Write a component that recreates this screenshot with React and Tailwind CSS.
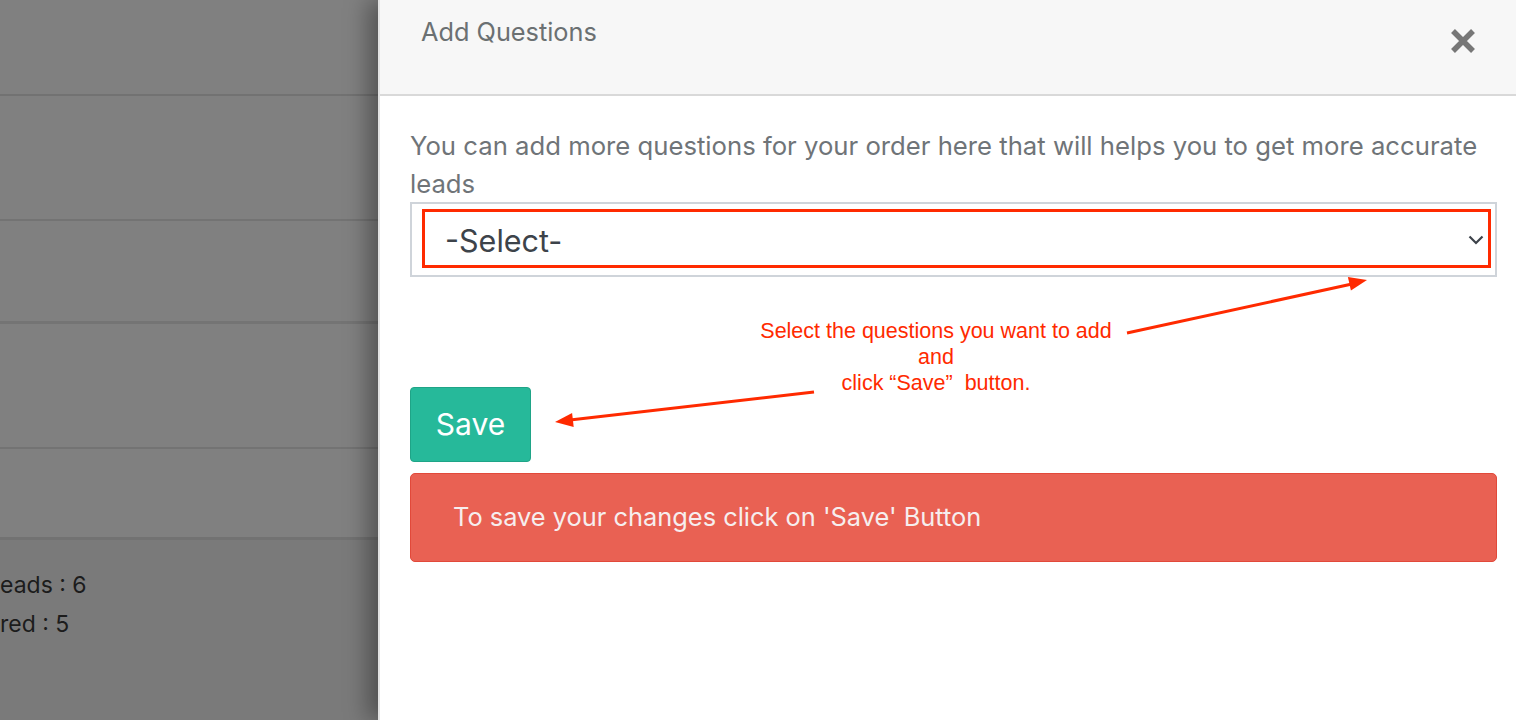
import React from "react";

export default function App() {
  return (
    <div className="relative flex h-[720px] w-[1516px] overflow-hidden bg-white" style={{ fontFamily: "Inter, 'Liberation Sans', sans-serif" }}>
      {/* dimmed background page */}
      <div className="flex w-[378px] shrink-0 flex-col bg-[#808080]">
        <div className="h-[96px] border-b-2 border-[#727272]" />
        <div className="h-[125px] border-b-2 border-[#737373]" />
        <div className="h-[103px] border-b-[3px] border-[#747474]" />
        <div className="h-[125px] border-b-2 border-[#737373]" />
        <div className="h-[91px] border-b-[3px] border-[#727272]" />
        <div className="flex-1 bg-[#7a7a7a] pt-[26px] text-[23px] leading-[39px] text-[#1c1c1c]">
          <div>eads : 6</div>
          <div>red : 5</div>
        </div>
      </div>

      {/* side panel */}
      <div className="relative z-10 flex flex-1 flex-col border-l-2 border-[#e3e3e3] bg-white shadow-[-10px_0_22px_rgba(0,0,0,0.35)]">
        <div className="flex h-[96px] shrink-0 items-start justify-between border-b-2 border-[#d9d9d9] bg-[#f7f7f7] pl-[41px] pr-[40px]">
          <div className="pt-[14px] text-[25.3px] leading-[36px] text-[#6b7072]">Add Questions</div>
          <svg className="mt-[28px]" width="26" height="26" viewBox="0 0 26 26">
            <path d="M3 3 L23 23 M23 3 L3 23" stroke="#777777" strokeWidth="5.5" strokeLinecap="butt" />
          </svg>
        </div>

        <div className="flex flex-col pl-[30px] pr-[19px] pt-[31px]">
          <p className="text-[25.7px] leading-[38px] text-[#6f7478]">
            You can add more questions for your order here that will helps you to get more accurate leads
          </p>
          <div className="mt-[-1px] h-[75px] border-2 border-[#cfd4da] pb-[7px] pl-[10px] pr-[4px] pt-[5px]">
            <div className="flex h-full items-center justify-between border-[3px] border-[#ff2a00] pl-[20px] pr-[4px]">
              <span className="pt-[5px] text-[30.5px] leading-none text-[#3d434a]">-Select-</span>
              <svg className="mt-[2px]" width="16" height="10" viewBox="0 0 16 10">
                <path d="M1.5 1.5 L8 8 L14.5 1.5" fill="none" stroke="#3d434a" strokeWidth="2.2" />
              </svg>
            </div>
          </div>

          <button className="mt-[110px] flex h-[75px] w-[121px] items-center justify-center rounded-[4px] border border-[#1fa487] bg-[#26b99a] text-[30px] text-white">
            Save
          </button>

          <div className="mt-[11px] flex h-[89px] items-center rounded-[5px] border border-[#e2493a] bg-[#e96153] pl-[42px] text-[25.4px] text-[#f6eeee]">
            To save your changes click on 'Save' Button
          </div>
        </div>
      </div>

      {/* annotation overlay */}
      <div
        className="pointer-events-none absolute left-[686px] top-[318px] z-20 w-[500px] text-center text-[21.5px] leading-[26px] text-[#ff2a00]"
        style={{ fontFamily: "'Liberation Sans', Arial, sans-serif" }}
      >
        <div>Select the questions you want to add</div>
        <div>and</div>
        <div>click “Save”&nbsp; button.</div>
      </div>
      <svg className="pointer-events-none absolute left-0 top-0 z-20" width="1516" height="720" viewBox="0 0 1516 720">
        <line x1="1127" y1="333" x2="1352" y2="284" stroke="#ff2a00" strokeWidth="3" />
        <polygon points="1367,280 1350.9,290.6 1347.9,277" fill="#ff2a00" />
        <line x1="814" y1="392" x2="570" y2="420" stroke="#ff2a00" strokeWidth="3" />
        <polygon points="555,422 573.7,426.9 572.1,412.9" fill="#ff2a00" />
      </svg>
    </div>
  );
}
